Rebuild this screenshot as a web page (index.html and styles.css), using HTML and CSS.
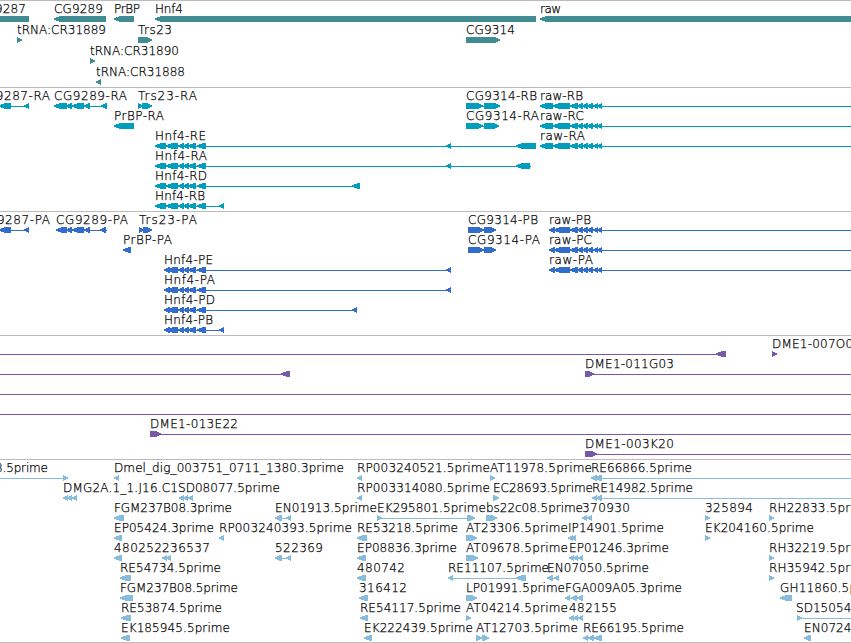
FILE: index.html
```
<!DOCTYPE html>
<html>
<head>
<meta charset="utf-8">
<title>Genome browser</title>
<link rel="stylesheet" href="styles.css">
<script>

// row, label, label start, label end, shapes
// shapes: "L" arrow to the left, "R" arrow to the right, "=" connecting line
const hnf = 'L155,166 L166,178 L178,184 L183,189 L188,196 L197,206 '
const hnfP = 'L164,170 L167,178 L178,184 L183,189 L188,196 L197,206 '
const rawEnd = 'L570,578 L577,583 L582,588 L587,593 L593,598 L597,602 =602,851'
const raw = 'L540,553 L553,570 ' + rawEnd
const rawP = 'L549,555 L554,570 ' + rawEnd

const tracks = {
  genes: [
    [0, 'CG9287', -23, 26, 'L-40,29'],
    [0, 'CG9289', 54, 103, 'L54,106'],
    [0, 'PrBP', 114, 140, 'L114,134'],
    [0, 'Hnf4', 155, 183, 'L155,536'],
    [0, 'raw', 540, 561, 'L540,860'],
    [1, 'tRNA:CR31889', 17, 106, 'R17,22'],
    [1, 'Trs23', 138, 172, 'R138,152'],
    [1, 'CG9314', 466, 515, 'R466,500'],
    [2, 'tRNA:CR31890', 90, 179, 'R90,95'],
    [3, 'tRNA:CR31888', 96, 185, 'L96,101']
  ],
  transcripts: [
    [0, 'CG9287-RA', -23, 50, 'L-1,11 =11,29 L24,29'],
    [0, 'CG9289-RA', 54, 127, 'L54,67 L66,72 L72,84 L84,90 =84,107 L101,107'],
    [0, 'Trs23-RA', 138, 197, 'R138,143 R142,152'],
    [0, 'CG9314-RB', 466, 537, 'R466,483 R484,500 =480,486'],
    [0, 'raw-RB', 540, 583, raw],
    [1, 'PrBP-RA', 114, 164, 'L114,134'],
    [1, 'CG9314-RA', 466, 539, 'R466,483 R484,499 =480,486'],
    [1, 'raw-RC', 540, 584, raw],
    [2, 'Hnf4-RE', 155, 206, hnf + '=196,536 L446,451 L516,536'],
    [2, 'raw-RA', 540, 585, raw],
    [3, 'Hnf4-RA', 155, 207, hnf + '=196,531 L446,451 L516,530'],
    [4, 'Hnf4-RD', 155, 207, hnf + '=196,360 L352,360'],
    [5, 'Hnf4-RB', 155, 205, hnf + '=196,224 L219,224']
  ],
  proteins: [
    [0, 'CG9287-PA', -22, 50, 'L-1,11 =11,29 L24,29'],
    [0, 'CG9289-PA', 56, 128, 'L56,67 L66,72 L72,84 L84,90 =84,107 L100,106'],
    [0, 'Trs23-PA', 139, 197, 'R139,144 R143,152'],
    [0, 'CG9314-PB', 468, 538, 'R468,484 R484,496'],
    [0, 'raw-PB', 549, 591, rawP],
    [1, 'PrBP-PA', 123, 172, 'L123,131'],
    [1, 'CG9314-PA', 468, 540, 'R468,484 R484,496'],
    [1, 'raw-PC', 549, 592, rawP],
    [2, 'Hnf4-PE', 164, 213, hnfP + '=196,451 L446,451'],
    [2, 'raw-PA', 549, 593, rawP],
    [3, 'Hnf4-PA', 164, 215, hnfP + '=196,451 L446,451'],
    [4, 'Hnf4-PD', 164, 215, hnfP + '=196,357 L352,357'],
    [5, 'Hnf4-PB', 164, 213, hnfP + '=196,224 L219,224']
  ],
  clones: [
    [0, '', 0, 0, '=0,726 L716,726'],
    [0, 'DME1-007O05', 772, 861, 'R772,777'],
    [1, '', 0, 0, '=0,290 L281,290'],
    [1, 'DME1-011G03', 585, 674, 'R585,594 =590,851'],
    [2, '', 0, 0, '=0,851'],
    [3, '', 0, 0, '=0,851'],
    [4, 'DME1-013E22', 150, 238, 'R150,161 =156,851'],
    [5, 'DME1-003K20', 585, 674, 'R585,597 =590,851']
  ],
  ests: [
    [0, '8.5prime', -5, 48, '=0,68 R63,68'],
    [0, 'Dmel_dig_003751_0711_1380.3prime', 114, 344, 'L114,119'],
    [0, 'RP003240521.5prime', 357, 490, 'L357,362'],
    [0, 'AT11978.5prime', 490, 592, 'R490,495'],
    [0, 'RE66866.5prime', 591, 692, 'L591,597 L594,602 =602,851'],
    [1, 'DMG2A.1_1.J16.C1', 63, 178, 'L63,68 L67,72 L72,77'],
    [1, 'SD08077.5prime', 178, 280, 'L179,184 L183,188 L188,193'],
    [1, 'RP003314080.5prime', 357, 490, 'L357,362'],
    [1, 'EC28693.5prime', 493, 593, 'R493,499'],
    [1, 'RE14982.5prime', 592, 693, 'L592,597 L596,602 =602,851'],
    [2, 'FGM237B08.3prime', 114, 232, 'L114,124'],
    [2, 'EN01913.5prime', 275, 377, 'L275,282 =282,291 L286,291'],
    [2, 'EK295801.5prime', 377, 486, 'R377,382 =382,475 R467,475'],
    [2, 'bs22c08.5prime', 486, 583, 'R486,497'],
    [2, '370930', 582, 630, 'L582,587 L587,592'],
    [2, '325894', 705, 753, 'R705,710'],
    [2, 'RH22833.5prime', 769, 873, 'R769,774'],
    [3, 'EP05424.3prime', 114, 214, 'L114,122'],
    [3, 'RP003240393.5prime', 219, 352, 'L219,224'],
    [3, 'RE53218.5prime', 357, 458, 'L357,367'],
    [3, 'AT23306.5prime', 466, 568, 'R466,477'],
    [3, 'IP14901.5prime', 568, 664, 'L568,573 L571,576'],
    [3, 'EK204160.5prime', 705, 814, 'R705,710'],
    [4, '480252', 114, 162, 'L114,122'],
    [4, '236537', 162, 210, 'L162,167 L166,171'],
    [4, '522369', 275, 323, 'L275,282 =282,291 L286,291'],
    [4, 'EP08836.3prime', 357, 457, 'L357,366'],
    [4, 'AT09678.5prime', 466, 568, 'R466,478'],
    [4, 'EP01246.3prime', 569, 669, 'L569,574 L573,578 L578,583'],
    [4, 'RH32219.5prime', 769, 873, 'R769,774'],
    [5, 'RE54734.5prime', 120, 221, 'L120,131'],
    [5, '480742', 357, 405, 'L357,366'],
    [5, 'RE11107.5prime', 448, 549, 'L448,453 =453,526 L516,526'],
    [5, 'EN07050.5prime', 547, 649, 'L547,553 =551,559 L554,559'],
    [5, 'RH35942.5prime', 769, 873, 'R769,774'],
    [6, 'FGM237B08.5prime', 120, 238, 'L120,133'],
    [6, '316412', 359, 407, 'L359,368'],
    [6, 'LP01991.5prime', 466, 565, 'R466,477'],
    [6, 'FGA009A05.3prime', 565, 682, 'L565,570 =570,583 L571,577 L577,583'],
    [6, 'GH11860.5prime', 780, 885, 'L780,792'],
    [7, 'RE53874.5prime', 121, 222, 'L121,131'],
    [7, 'RE54117.5prime', 360, 461, 'L360,368'],
    [7, 'AT04214.5prime', 466, 568, 'R466,471'],
    [7, '482155', 569, 617, 'L569,574 L573,578 L578,583'],
    [7, 'SD15054.5prime', 796, 898, 'R797,802 =802,851'],
    [8, 'EK185945.5prime', 121, 230, 'L121,130'],
    [8, 'EK222439.5prime', 364, 473, 'L364,372'],
    [8, 'AT12703.5prime', 476, 578, 'R476,482 R482,489'],
    [8, 'RE66195.5prime', 583, 684, 'L583,588 L588,594 L594,602'],
    [8, 'EN07240.5prime', 804, 906, 'L804,811']
  ]
}

function add(svg, tag, attrs, text) {
  const el = document.createElementNS('http://www.w3.org/2000/svg', tag)
  for (const name in attrs) {
    el.setAttribute(name, attrs[name])
  }
  if (text) {
    el.textContent = text
  }
  svg.appendChild(el)
}

function drawShape(svg, shape, y) {
  const [a, b] = shape.slice(1).split(',').map(Number)
  if (shape[0] === '=') {
    add(svg, 'rect', { class: 'feature', x: a, y: y + 3, width: b - a, height: 1 })
    return
  }
  // pointed head, the long features have a longer one
  const left = shape[0] === 'L'
  const dir = left ? 1 : -1
  const tip = left ? a : b
  const end = left ? b : a
  const head = b - a > 7 ? 6 : 5
  const neck = tip + dir * head
  const mid = tip + dir * head / 2
  add(svg, 'polygon', {
    class: 'feature',
    points: `${tip},${y + 2.4} ${mid},${y + 1} ${neck},${y} ${end},${y} ${end},${y + 6} ${neck},${y + 6} ${mid},${y + 5} ${tip},${y + 3.6}`
  })
}

document.addEventListener('DOMContentLoaded', function(){
  for (const id in tracks) {
    const svg = document.getElementById(id)
    const rowHeight = id === 'genes' ? 21 : 20
    for (const [row, label, start, end, shapes] of tracks[id]) {
      const top = row * rowHeight
      shapes.split(' ').forEach(shape => drawShape(svg, shape, top + 15))
      if (label) {
        add(svg, 'text', { class: 'label', x: start, y: top + 12, textLength: end - start }, label)
      }
    }
  }
})
</script>
</head>
<body>

<div class="browser">
  <div class="track track--genes"><svg class="track__canvas" id="genes"></svg></div>
  <div class="track track--transcripts"><svg class="track__canvas" id="transcripts"></svg></div>
  <div class="track track--proteins"><svg class="track__canvas" id="proteins"></svg></div>
  <div class="track track--clones"><svg class="track__canvas" id="clones"></svg></div>
  <div class="track track--ests"><svg class="track__canvas" id="ests"></svg></div>
</div>

</body>
</html>
```
FILE: styles.css
```
body {
	margin: 0;
	background-color: #fff;
	overflow: hidden;
}

.browser {
	display: flex;
	flex-direction: column;
	width: 851px;
	height: 643px;
	border-bottom: 1px solid #bbb;
	box-sizing: border-box;
}

.track {
	border-top: 1px solid #bbb;
	box-sizing: border-box;
	height: 124px;
	overflow: hidden;
}

.track--genes {
	height: 87px;
	color: #408c92;
}

.track--transcripts {
	color: #009dbd;
}

.track--proteins {
	color: #326dcc;
}

.track--clones {
	color: #7759a8;
}

.track--ests {
	height: 183px;
	color: #88bcdd;
}

.track__canvas {
	display: block;
	width: 100%;
	height: 100%;
}

.feature {
	fill: currentColor;
	shape-rendering: crispEdges;
}

.label {
	fill: #000;
	stroke: #000;
	stroke-width: 0.25px;
	font-family: "DejaVu Sans", sans-serif;
	font-size: 12px;
	font-weight: 200;
}
```
